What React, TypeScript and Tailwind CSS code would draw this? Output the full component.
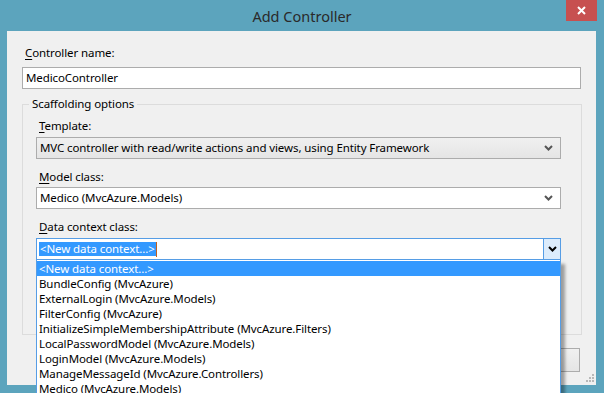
import { ReactNode } from "react";

const dataContexts = [
  "<New data context...>",
  "BundleConfig (MvcAzure)",
  "ExternalLogin (MvcAzure.Models)",
  "FilterConfig (MvcAzure)",
  "InitializeSimpleMembershipAttribute (MvcAzure.Filters)",
  "LocalPasswordModel (MvcAzure.Models)",
  "LoginModel (MvcAzure.Models)",
  "ManageMessageId (MvcAzure.Controllers)",
  "Medico (MvcAzure.Models)",
  "RegisterExternalLoginModel (MvcAzure.Models)",
];

const Chevron = ({ color }: { color: string }) => (
  <svg width="9" height="6" viewBox="0 0 9 6" className="block">
    <path d="M1 1 L4.5 4.5 L8 1" fill="none" stroke={color} strokeWidth="2" />
  </svg>
);

const Label = ({ accel, rest }: { accel: string; rest: string }) => (
  <p className="text-[11.5px] leading-[16px] tracking-[-0.1px] text-black">
    <span className="underline underline-offset-[2px]">{accel}</span>
    {rest}
  </p>
);

const Select = ({
  children,
  gray,
}: {
  children: ReactNode;
  gray?: boolean;
}) => (
  <div
    className={`flex h-[22px] w-[525px] items-center border border-[#acacac] pl-[3px] pr-[7px] ${
      gray ? "bg-gradient-to-b from-[#f0f0f0] to-[#e5e5e5]" : "bg-white"
    }`}
  >
    <p className="flex-1 text-[11.5px] leading-[16px] tracking-[-0.1px] text-black">
      {children}
    </p>
    <Chevron color="#555" />
  </div>
);

const App = () => {
  return (
    <div className="flex h-[393px] w-[604px] flex-col overflow-hidden bg-[#5ca4bd] font-['Noto_Sans',sans-serif]">
      {/* Title bar */}
      <div className="flex h-[31px] shrink-0 items-start">
        <span className="w-[38px]"></span>
        <p className="flex-1 pt-[6px] text-center text-[14.5px] leading-[20px] text-[#2a2a2a]">
          Add Controller
        </p>
        <div className="mr-[7px] flex h-[21px] w-[31px] items-center justify-center bg-[#c75050]">
          <svg width="9" height="9" viewBox="0 0 9 9">
            <path d="M1 1 L8 8 M8 1 L1 8" stroke="white" strokeWidth="2" />
          </svg>
        </div>
      </div>

      {/* Client area */}
      <div className="relative ml-[7px] mr-[8px] h-[354px] shrink-0 bg-[#f0f0f0] px-[15px]">
        <div className="mt-[14px] pl-[3px]">
          <Label accel="C" rest="ontroller name:" />
        </div>
        <div className="mt-[6px] flex h-[22px] items-center border border-[#acacac] bg-white pl-[3px]">
          <p className="text-[11.5px] leading-[16px] tracking-[-0.1px] text-black">
            MedicoController
          </p>
        </div>

        {/* Scaffolding options */}
        <fieldset className="mt-[7px] w-[560px] border border-[#dcdcdc] pb-[74px]">
          <legend className="ml-[6px] px-[3px] text-[11.5px] leading-[16px] tracking-[-0.1px] text-black">
            Scaffolding options
          </legend>
          <div className="ml-[13px] flex flex-col">
            <div className="mt-[6px] pl-[3px]">
              <Label accel="T" rest="emplate:" />
            </div>
            <div className="mt-[3px]">
              <Select gray>
                MVC controller with read/write actions and views, using Entity
                Framework
              </Select>
            </div>
            <div className="mt-[10px] pl-[3px]">
              <Label accel="M" rest="odel class:" />
            </div>
            <div className="mt-[2px]">
              <Select>Medico (MvcAzure.Models)</Select>
            </div>
            <div className="mt-[10px] pl-[3px]">
              <Label accel="D" rest="ata context class:" />
            </div>

            {/* Data context combobox */}
            <div className="relative mt-[3px] w-[525px]">
              <div className="flex h-[22px] items-center border border-[#569de5] bg-white">
                <div className="flex flex-1 items-center pl-[2px]">
                  <span className="bg-[#3399ff] px-[1px] text-[11.5px] leading-[14px] tracking-[-0.1px] text-white">
                    &lt;New data context...&gt;
                  </span>
                  <span className="h-[15px] w-[1px] bg-[#c06020]"></span>
                </div>
                <div className="flex h-full w-[17px] items-center justify-center border-l border-[#569de5] bg-[#dcecfc]">
                  <Chevron color="#000" />
                </div>
              </div>

              {/* Dropdown list */}
              <div className="absolute left-0 top-full z-10 w-[525px] border border-t-0 border-[#569de5] bg-white pt-[1px] shadow-[4px_4px_3px_rgba(0,0,0,0.35)]">
                {dataContexts.map((item, i) => (
                  <p
                    key={item}
                    className={`h-[15px] pl-[2px] text-[11.5px] leading-[15px] tracking-[-0.1px] ${
                      i === 0 ? "bg-[#3399ff] text-white" : "text-black"
                    }`}
                  >
                    {item}
                  </p>
                ))}
              </div>
            </div>
          </div>
        </fieldset>

        {/* Buttons */}
        <div className="mt-[13px] flex justify-end gap-[8px] pr-[1px]">
          <div className="h-[24px] w-[75px] border border-[#acacac] bg-gradient-to-b from-[#f0f0f0] to-[#e5e5e5]"></div>
          <div className="h-[24px] w-[75px] border border-[#acacac] bg-gradient-to-b from-[#f0f0f0] to-[#e5e5e5]"></div>
        </div>

        {/* Size grip */}
        <svg
          width="9"
          height="9"
          viewBox="0 0 9 9"
          className="absolute bottom-[2px] right-[1px]"
        >
          <rect x="6" y="0" width="2" height="2" fill="#b8b8b8" />
          <rect x="3" y="3" width="2" height="2" fill="#b8b8b8" />
          <rect x="6" y="3" width="2" height="2" fill="#b8b8b8" />
          <rect x="0" y="6" width="2" height="2" fill="#b8b8b8" />
          <rect x="3" y="6" width="2" height="2" fill="#b8b8b8" />
          <rect x="6" y="6" width="2" height="2" fill="#b8b8b8" />
        </svg>
      </div>
    </div>
  );
};

export default App;
